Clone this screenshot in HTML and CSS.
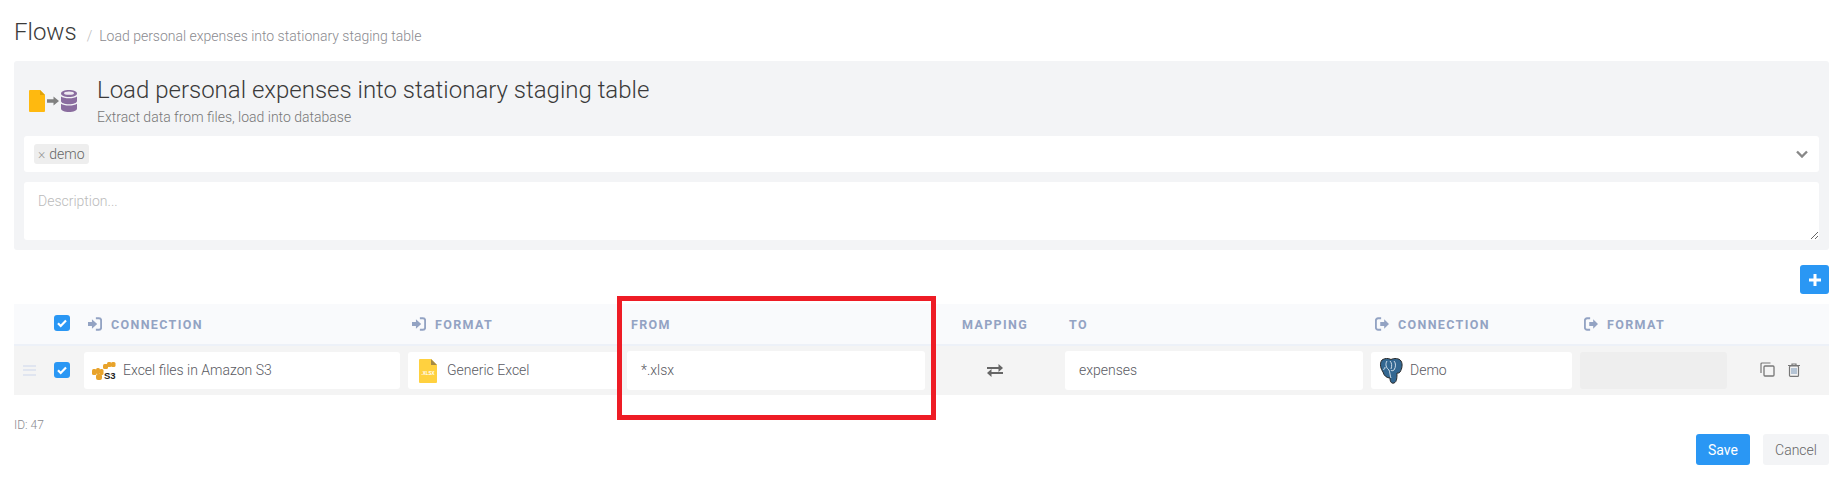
FILE: index.html
```html
<!DOCTYPE html>
<html lang="en">
<head>
<meta charset="utf-8">
<title>Flows</title>
<link rel="stylesheet" href="styles.css">
</head>
<body>
<svg class="defs" width="0" height="0" aria-hidden="true">
  <symbol id="signin" viewBox="0 0 16 16"><path d="M0 5.800h4.500V2.600L10.500 8l-6 5.400V10.200H0z"/><path d="M9 1.500h3.500A2.500 2.500 0 0 1 15 4v8a2.500 2.500 0 0 1-2.500 2.500H9" fill="none" stroke="currentColor" stroke-width="2.200"/></symbol>
  <symbol id="signout" viewBox="0 0 16 16"><path d="M6 5.800h4.500V2.600L16 8l-5.500 5.400V10.200H6z"/><path d="M7 1.500H3.500A2.500 2.500 0 0 0 1 4v8a2.500 2.500 0 0 0 2.500 2.500H7" fill="none" stroke="currentColor" stroke-width="2.200"/></symbol>
  <symbol id="tick" viewBox="0 0 16 16"><path d="M4 8.300l2.700 2.700L12 5.600" fill="none" stroke="#fff" stroke-width="2.200"/></symbol>
</svg>

<header class="crumbs">
  <h1 class="crumb-title">Flows</h1>
  <span class="crumb-sep">/</span>
  <span class="crumb-page">Load personal expenses into stationary staging table</span>
</header>

<section class="panel">
  <div class="panel-head">
    <svg class="flow-icon" width="48" height="22" viewBox="0 0 48 22">
      <path fill="#ffb90f" d="M0 1a1 1 0 0 1 1-1h10l5 5v16a1 1 0 0 1-1 1H1a1 1 0 0 1-1-1z"/>
      <path fill="#e0a30a" d="M11 0l5 5h-5z"/>
      <path fill="#808080" d="M18 9.300h6.500V6.500L30 11l-5.500 4.500v-2.800H18z"/>
      <g fill="#8a6d9f">
        <path d="M32 3.500C32 1.300 35.500 0 40 0s8 1.300 8 3.500S44.500 7 40 7s-8-1.300-8-3.500z"/>
        <path d="M32 6.500c1.500 1.200 4.500 1.800 8 1.800s6.500-.6 8-1.800V11c0 2-3.500 3.200-8 3.200S32 13 32 11z"/>
        <path d="M32 13.800c1.500 1.200 4.500 1.800 8 1.800s6.500-.6 8-1.800V18.500c0 2.200-3.500 3.500-8 3.500s-8-1.300-8-3.500z"/>
      </g>
      <ellipse cx="40" cy="3.200" rx="5" ry="1.600" fill="#efeaf2"/>
    </svg>
    <div class="panel-text">
      <h2 class="flow-name">Load personal expenses into stationary staging table</h2>
      <p class="flow-desc">Extract data from files, load into database</p>
    </div>
  </div>
  <div class="tag-input">
    <span class="tag"><span class="tag-x">×</span>demo</span>
    <svg class="chevron" width="12" height="8" viewBox="0 0 12 8"><path d="M1 1.500l5 5 5-5" fill="none" stroke="#888" stroke-width="2.400"/></svg>
  </div>
  <textarea class="description" placeholder="Description..."></textarea>
</section>

<div class="toolbar">
  <button class="btn-add" type="button" aria-label="Add">
    <svg width="12" height="12" viewBox="0 0 12 12"><path d="M4.500 0h3v4.500H12v3H7.500V12h-3V7.500H0v-3h4.500z" fill="#fff"/></svg>
  </button>
</div>

<div class="table">
  <div class="grid-row head-row">
    <span></span>
    <span class="check"><svg width="16" height="16"><use href="#tick"/></svg></span>
    <span class="th th-conn"><svg class="th-icon" width="14" height="14"><use href="#signin"/></svg>CONNECTION</span>
    <span class="th th-conn"><svg class="th-icon" width="14" height="14"><use href="#signin"/></svg>FORMAT</span>
    <span class="th th-plain">FROM</span>
    <span class="th th-center">MAPPING</span>
    <span class="th th-plain">TO</span>
    <span class="th th-conn"><svg class="th-icon" width="14" height="14"><use href="#signout"/></svg>CONNECTION</span>
    <span class="th th-conn"><svg class="th-icon" width="14" height="14"><use href="#signout"/></svg>FORMAT</span>
    <span></span>
  </div>
  <div class="grid-row body-row">
    <span class="handle"><i></i><i></i><i></i></span>
    <span class="check"><svg width="16" height="16"><use href="#tick"/></svg></span>
    <div class="cell s3-cell">
      <svg class="cell-icon" width="24" height="20" viewBox="0 0 24 20">
        <g fill="#e8a32b">
          <rect x="11" y="3" width="5" height="5" rx="1.500"/><rect x="15" y="1" width="4.500" height="5" rx="1.500"/><rect x="19" y="1" width="4.500" height="5" rx="1.500"/>
          <rect x="0" y="8" width="4.500" height="6" rx="1.500"/><rect x="4" y="7" width="4" height="6" rx="1.500"/><rect x="7.500" y="8" width="4" height="6" rx="1.500"/><rect x="4" y="13" width="6" height="6" rx="2"/>
        </g>
        <text x="12" y="18" class="s3-text">S3</text>
      </svg>
      <span>Excel files in Amazon S3</span>
    </div>
    <div class="cell xlsx-cell">
      <svg class="cell-icon" width="18" height="24" viewBox="0 0 18 24">
        <path fill="#ffd13f" d="M1 0h11l6 6v17a1 1 0 0 1-1 1H1a1 1 0 0 1-1-1V1a1 1 0 0 1 1-1z"/>
        <path fill="#a58a45" d="M12 0l6 6h-6z"/>
        <text x="9" y="16" class="xlsx-text">.XLSX</text>
      </svg>
      <span>Generic Excel</span>
    </div>
    <div class="cell input-cell">*.xlsx</div>
    <div class="swap">
      <svg width="16" height="13" viewBox="0 0 16 13"><path d="M0 3h11.500V0L16 4l-4.500 4V5H0zM16 8H4.500V5L0 9l4.500 4v-3H16z" fill="#666"/></svg>
    </div>
    <div class="cell input-cell">expenses</div>
    <div class="cell pg-cell">
      <svg class="cell-icon" width="24" height="26" viewBox="0 0 24 26">
        <path fill="#336791" stroke="#2a2a2a" stroke-width="1" d="M3 2C6 0 9 0 12 1.500 15 0 20 0 22 3c2 3 1 8-1 11-1 1.500-2 1-3 1 0 4 0 9-3 10-3 1-4-2-4-5-3 0-6-2-7-6C2 11 0 6 3 2z"/>
        <path fill="none" stroke="#dfe8ef" stroke-width=".9" d="M8 3c-2 3-1 7 2 9 1 2 1 6 2 8M15 3c2 2 2 6 0 9-1 1-3 1-3 0M11 3c2 2 2 5 1 8M6 9c0 2-1 3-2 2"/>
      </svg>
      <span>Demo</span>
    </div>
    <div class="cell empty-cell"></div>
    <div class="row-actions">
      <svg width="15" height="15" viewBox="0 0 15 15"><path d="M10.500 1H2a1 1 0 0 0-1 1v9" fill="none" stroke="#777" stroke-width="1.200"/><rect x="4" y="4" width="10" height="10" rx="1" fill="none" stroke="#777" stroke-width="1.300"/></svg>
      <svg width="12" height="14" viewBox="0 0 12 14"><path d="M0 2.500h12M4 2.500V1h4v1.500" fill="none" stroke="#777" stroke-width="1.200"/><rect x="1.500" y="3" width="9" height="10.400" rx="1" fill="none" stroke="#777" stroke-width="1.200"/><path d="M4 5v6M6 5v6M8 5v6" stroke="#8aa3bf" stroke-width="1.200"/></svg>
    </div>
  </div>
</div>

<div class="meta">ID: 47</div>

<div class="form-actions">
  <button class="btn btn-save" type="button">Save</button>
  <button class="btn btn-cancel" type="button">Cancel</button>
</div>

<div class="highlight"></div>
</body>
</html>
```
FILE: styles.css
```css
* { box-sizing: border-box; }
html, body { margin: 0; }
body {
  position: relative;
  height: 477px;
  padding: 0 14px;
  overflow: hidden;
  background: #fff;
  font-family: Roboto, "Liberation Sans", sans-serif;
  font-weight: 300;
  font-size: 14px;
  color: #5a5a62;
}
.defs { position: absolute; }
button { font-family: inherit; font-weight: inherit; border: 0; cursor: pointer; }

.crumbs { display: flex; align-items: flex-start; height: 61px; padding-top: 17px; }
.crumb-title { margin: 0; font-size: 24px; line-height: 30px; font-weight: 300; color: #3a3a3a; }
.crumb-sep { margin: 10px 7px 0 10px; line-height: 18px; color: #bbb; font-size: 14px; }
.crumb-page { margin-top: 10px; line-height: 18px; color: #8a8a8f; font-size: 14px; }

.panel { background: #f3f4f6; border-radius: 3px; padding: 0 10px 10px; height: 189px; }
.panel-head { display: flex; height: 75px; }
.flow-icon { flex: none; margin: 29px 19px 0 5px; }
.panel-text { padding-top: 14px; margin-left: 1px; }
.flow-name { margin: 0; font-size: 24px; line-height: 30px; font-weight: 300; color: #3a3a3a; }
.flow-desc { margin: 3px 0 0; font-size: 14px; line-height: 18px; color: #777; }

.tag-input {
  display: flex; align-items: center; justify-content: space-between;
  height: 36px; padding: 0 11px 0 10px;
  background: #fff; border-radius: 3px;
}
.tag { display: flex; align-items: center; height: 20px; padding: 0 4px; border-radius: 3px; background: #eee; font-size: 14px; color: #666; }
.tag-x { margin-right: 4px; color: #999; font-size: 14px; }
.description {
  display: block; width: 100%; height: 58px; margin-top: 10px; padding: 11px 14px;
  border: 0; border-radius: 3px; background: #fff;
  font: 300 14px Roboto, sans-serif; color: #666; outline: none;
}
.description::placeholder { color: #bbb; opacity: 1; }

.toolbar { display: flex; justify-content: flex-end; padding-top: 15px; height: 54px; }
.btn-add { display: flex; align-items: center; justify-content: center; width: 29px; height: 29px; padding: 0; background: #2a97f4; border-radius: 3px; }

.grid-row {
  display: grid;
  grid-template-columns: 30px 36px 324px 219px 306px 132px 306px 209px 155px 98px;
}
.head-row { height: 42px; background: #f9fafc; border-bottom: 2px solid #edf1f8; align-items: center; }
.body-row { height: 49px; background: #f4f4f4; align-items: center; }
.check { justify-self: start; margin: 0 0 2px 10px; display: flex; width: 16px; height: 16px; background: #2a97f4; border-radius: 3px; }
.th { font-weight: 700; font-size: 12.500px; letter-spacing: 1.350px; color: #93a3c3; white-space: nowrap; }
.th-conn { display: flex; align-items: center; padding-left: 8px; }
.th-plain { padding-left: 8px; }
.th-center { text-align: center; }
.th-icon { flex: none; margin-right: 9px; fill: #93a3c3; color: #93a3c3; }

.handle { display: flex; flex-direction: column; gap: 2.500px; margin: 0 0 1px 9px; width: 13px; }
.handle i { display: block; height: 2px; background: #e0e5f0; }

.cell { display: flex; align-items: center; height: 37px; margin: 0 4px; background: #fff; border-radius: 3px; }
.cell span { margin-bottom: 2px; }
.cell-icon { flex: none; }
.s3-cell .cell-icon { margin: 0 7px 0 8px; }
.xlsx-cell .cell-icon { margin: 0 10px 0 11px; }
.pg-cell .cell-icon { margin: 0 7px 0 8px; }
.input-cell { height: 39px; padding: 0 0 2px 14px; }
.empty-cell { background: #eee; }
.swap { display: flex; justify-content: center; }
.s3-text { font: 700 9.500px "Liberation Sans", sans-serif; fill: #222; }
.xlsx-text { font: 700 4.500px "Liberation Sans", sans-serif; fill: #fff; text-anchor: middle; }
.row-actions { display: flex; align-items: center; gap: 13px; padding: 0 0 2px 29px; }

.meta { margin-top: 22px; height: 17px; font-size: 12px; line-height: 16px; color: #8a8a8f; }
.form-actions { display: flex; justify-content: flex-end; gap: 13px; }
.btn { height: 31px; border-radius: 3px; font-size: 14px; }
.btn-save { width: 54px; background: #2a97f4; color: #fff; font-weight: 400; }
.btn-cancel { width: 66px; background: #f3f4f6; color: #666; }

.highlight { position: absolute; left: 617px; top: 296px; width: 319px; height: 124px; border: 5px solid #ee1c25; pointer-events: none; }
```
